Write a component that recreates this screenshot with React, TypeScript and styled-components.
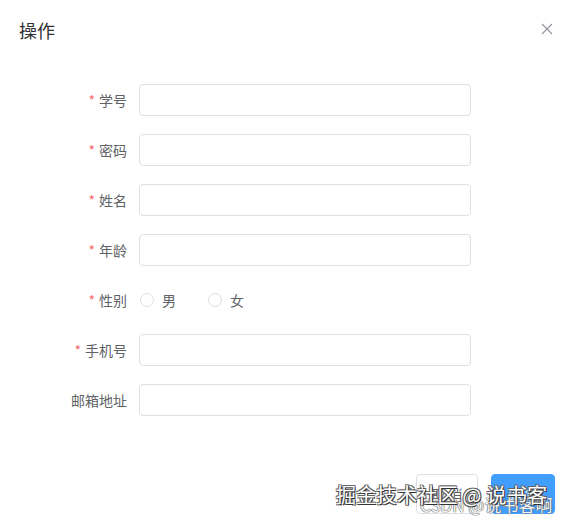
import React from 'react';
import styled, { createGlobalStyle } from 'styled-components';

const GlobalStyle = createGlobalStyle`
  html, body {
    margin: 0;
    padding: 0;
    background: #ffffff;
    font-family: "Noto Sans CJK SC", "Liberation Sans", sans-serif;
  }
`;

const Dialog = styled.div`
  position: relative;
  width: 570px;
  height: 522px;
  overflow: hidden;
  background: #ffffff;
`;

const Header = styled.div`
  display: flex;
  align-items: center;
  justify-content: space-between;
  padding: 18px 16px 12px 19px;
  height: 24px;
`;

const Title = styled.span`
  font-size: 18px;
  line-height: 24px;
  color: #303133;
`;

const CloseButton = styled.button`
  border: none;
  background: transparent;
  padding: 0;
  width: 14px;
  height: 14px;
  margin-top: -2px;
  display: flex;
  align-items: center;
  justify-content: center;
  cursor: pointer;
`;

const Body = styled.div`
  padding: 30px 20px 30px 20px;
`;

const Form = styled.form`
  display: flex;
  flex-direction: column;
  gap: 18px;
`;

const Item = styled.div`
  display: flex;
  align-items: center;
  height: 32px;
`;

const Label = styled.label<{ $required?: boolean }>`
  width: 107px;
  padding-right: 12px;
  text-align: right;
  font-size: 14px;
  color: #606266;
  line-height: 32px;
  &::before {
    content: ${(p) => (p.$required ? "'*'" : "''")};
    color: #f56c6c;
    margin-right: 4px;
  }
`;

const Input = styled.input`
  box-sizing: border-box;
  width: 332px;
  height: 32px;
  border: 1px solid #dcdfe6;
  border-radius: 4px;
  padding: 0 15px;
  outline: none;
  font-size: 14px;
  color: #606266;
`;

const RadioGroup = styled.div`
  display: flex;
  align-items: center;
`;

const RadioLabel = styled.label`
  display: flex;
  align-items: center;
  margin-right: 31px;
  font-size: 14px;
  color: #606266;
  cursor: pointer;
`;

const RadioCircle = styled.span`
  box-sizing: border-box;
  display: inline-block;
  width: 14px;
  height: 14px;
  border: 1px solid #dcdfe6;
  border-radius: 50%;
  margin-left: 1px;
  margin-right: 8px;
`;

const Footer = styled.div`
  display: flex;
  justify-content: flex-end;
  gap: 13px;
  padding: 28px 15px 20px 20px;
`;

const Button = styled.button<{ $primary?: boolean; $width: number }>`
  box-sizing: border-box;
  width: ${(p) => p.$width}px;
  height: 40px;
  padding: 0;
  font-family: inherit;
  font-size: 14px;
  border-radius: 4px;
  border: 1px solid ${(p) => (p.$primary ? '#409eff' : '#dcdfe6')};
  background: ${(p) => (p.$primary ? '#409eff' : '#ffffff')};
  color: ${(p) => (p.$primary ? '#ffffff' : '#606266')};
  cursor: pointer;
`;

const Watermark = styled.div`
  position: absolute;
  left: 336px;
  top: 481px;
  font-size: 20px;
  line-height: 28px;
  color: #ffffff;
  white-space: nowrap;
  letter-spacing: 0.3px;
  text-shadow: 1px 1px 0 #333, -1px -1px 0 #666, 1px -1px 0 #666, -1px 1px 0 #666;
  pointer-events: none;
`;

const SubWatermark = styled.div`
  position: absolute;
  left: 420px;
  top: 494px;
  font-size: 17px;
  line-height: 22px;
  color: #f4f4f4;
  white-space: nowrap;
  text-shadow: 0 0 1px #666, 0 0 1px #666, 0 0 1px #666;
  pointer-events: none;
`;

const fields: { label: string; required: boolean }[] = [
  { label: '学号', required: true },
  { label: '密码', required: true },
  { label: '姓名', required: true },
  { label: '年龄', required: true },
];

const App = () => {
  return (
    <>
      <GlobalStyle />
      <Dialog>
        <Header>
          <Title>操作</Title>
          <CloseButton aria-label="关闭">
            <svg width="12" height="12" viewBox="0 0 12 12">
              <path d="M1 1 L11 11 M11 1 L1 11" stroke="#909399" strokeWidth="1.1" />
            </svg>
          </CloseButton>
        </Header>
        <Body>
          <Form>
            {fields.map((f) => (
              <Item key={f.label}>
                <Label $required={f.required}>{f.label}</Label>
                <Input type={f.label === '密码' ? 'password' : 'text'} />
              </Item>
            ))}
            <Item>
              <Label $required>性别</Label>
              <RadioGroup>
                <RadioLabel>
                  <RadioCircle />男
                </RadioLabel>
                <RadioLabel>
                  <RadioCircle />女
                </RadioLabel>
              </RadioGroup>
            </Item>
            <Item>
              <Label $required>手机号</Label>
              <Input type="text" />
            </Item>
            <Item>
              <Label>邮箱地址</Label>
              <Input type="text" />
            </Item>
          </Form>
        </Body>
        <Footer>
          <Button type="button" $width={62}>取 消</Button>
          <Button type="button" $width={64} $primary>确 定</Button>
        </Footer>
        <SubWatermark>CSDN @说书客啊</SubWatermark>
        <Watermark>掘金技术社区 @ 说书客</Watermark>
      </Dialog>
    </>
  );
};

export default App;
